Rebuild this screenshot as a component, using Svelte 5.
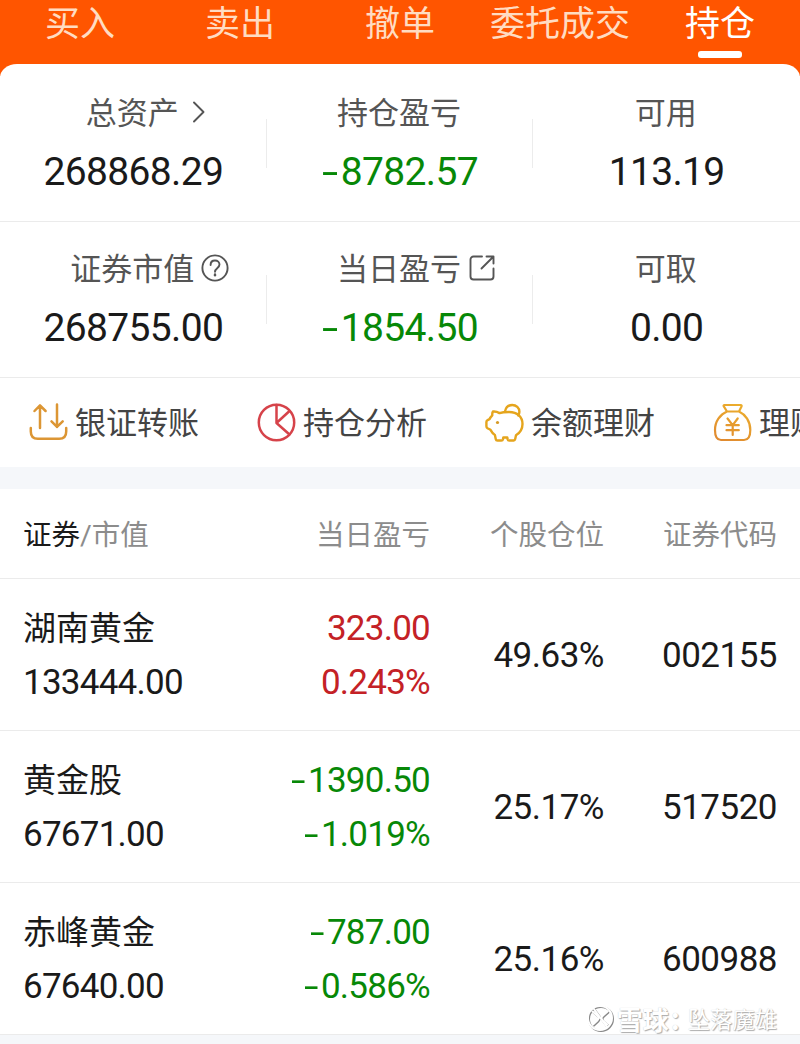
<script>
    const tabs = ["买入", "卖出", "撤单", "委托成交", "持仓"];
    let activeTab = $state("持仓");

    const summary = [
        [
            { label: "总资产", value: "268868.29", icon: "chevron" },
            { label: "持仓盈亏", value: "-8782.57" },
            { label: "可用", value: "113.19" },
        ],
        [
            { label: "证券市值", value: "268755.00", icon: "help" },
            { label: "当日盈亏", value: "-1854.50", icon: "open" },
            { label: "可取", value: "0.00" },
        ],
    ];

    const actions = [
        { label: "银证转账", icon: "transfer" },
        { label: "持仓分析", icon: "pie" },
        { label: "余额理财", icon: "piggy" },
        { label: "理财", icon: "bag" },
    ];

    const holdings = [
        {
            name: "湖南黄金",
            market: "133444.00",
            profit: "323.00",
            rate: "0.243%",
            position: "49.63%",
            code: "002155",
        },
        {
            name: "黄金股",
            market: "67671.00",
            profit: "-1390.50",
            rate: "-1.019%",
            position: "25.17%",
            code: "517520",
        },
        {
            name: "赤峰黄金",
            market: "67640.00",
            profit: "-787.00",
            rate: "-0.586%",
            position: "25.16%",
            code: "600988",
        },
    ];
</script>

{#snippet amount(text)}
    {#if text.startsWith("-")}<span class="sign">-</span>{text.slice(1)}{:else}{text}{/if}
{/snippet}

<main class="page">
    <nav class="tabs">
        {#each tabs as tab}
            <button
                class="tab"
                class:active={tab === activeTab}
                onclick={() => (activeTab = tab)}>{tab}</button
            >
        {/each}
    </nav>

    <section class="summary">
        {#each summary as row}
            <div class="summary-row">
                {#each row as item}
                    <div class="stat">
                        <span class="label">
                            {item.label}
                            {#if item.icon === "chevron"}
                                <svg class="mark chevron" width="14" height="24" viewBox="0 0 14 24">
                                    <path d="M2 2.5 11.5 12 2 21.5" />
                                </svg>
                            {:else if item.icon === "help"}
                                <svg class="mark help" width="28" height="28" viewBox="0 0 28 28">
                                    <circle cx="14" cy="14" r="12.6" />
                                    <path d="M9.6 11c0-2.7 1.8-4.5 4.4-4.5s4.5 1.700 4.500 4.100c0 3.500-4.500 3.700-4.500 7.100" />
                                    <path d="M14 20.500v.8" stroke-width="2.400" />
                                </svg>
                            {:else if item.icon === "open"}
                                <svg class="mark open" width="26" height="26" viewBox="0 0 26 26">
                                    <path d="M13 1.500H4.500a3 3 0 0 0-3 3v17a3 3 0 0 0 3 3h17a3 3 0 0 0 3-3v-8" />
                                    <path d="M17.500 1.500h7v7M24 2 12.500 13.500" />
                                </svg>
                            {/if}
                        </span>
                        <span class="value" class:down={item.value.startsWith("-")}>
                            {@render amount(item.value)}
                        </span>
                    </div>
                {/each}
            </div>
        {/each}
    </section>

    <section class="actions">
        {#each actions as action}
            <button class="action">
                {#if action.icon === "transfer"}
                    <svg width="39" height="39" viewBox="0 0 39 39" stroke="#dc9634" stroke-width="2.5">
                        <path d="M11 25V2.5M5.500 8 11 2.300 16.600 8M28 1.500v22.500M22.500 18.300l5.500 5.600 5.700-5.600" />
                        <path d="M1.800 25v3.500c0 4.500 2.500 7.300 7 7.300h21.400c4.500 0 7-2.800 7-7.300V25" />
                    </svg>
                {:else if action.icon === "pie"}
                    <svg width="39" height="39" viewBox="0 0 39 39" stroke="#d6434a" stroke-width="2.500">
                        <circle cx="19.500" cy="19.500" r="17.700" />
                        <path d="M19.500 2v18L32.500 31.500M19.500 20 32.500 8" />
                    </svg>
                {:else if action.icon === "piggy"}
                    <svg width="39" height="39" viewBox="0 0 39 39" stroke="#e5a51d" stroke-width="2.400">
                        <path
                            d="M8 8.500c2.500-.3 4.500.4 6.500 1.600 3-1 6-1.100 9.500-1.100 8.500 0 13.500 5 13.500 12 0 5-2.500 8.800-6.500 11.300l-.8 3.800c-.2.900-.7 1.400-1.500 1.400h-4.500c-.9 0-1.400-.4-1.600-1.300l-.3-1.700h-4l-.3 1.700c-.2.900-.7 1.300-1.600 1.300h-4c-.9 0-1.400-.4-1.600-1.300l-.9-4.200c-2.200-1.300-3.300-3.200-4.400-5.200l-3-1.500c-.8-.5-1.100-1-1.100-2v-4.300c0-1 .4-1.500 1.200-1.900l1.900-.9c.7-1.700 1.500-2.700 2.800-3.900C7.200 11.200 7 10 8 8.500Z"
                        />
                        <path d="M20 8.500c.8-4 3.500-6.500 7.200-6.500 4 0 7.200 3 7.200 6.800 0 1.600-.4 2.600-1.100 3.600" />
                        <circle cx="12.500" cy="19.500" r="1.600" fill="#d69a26" stroke="none" />
                    </svg>
                {:else}
                    <svg width="39" height="39" viewBox="0 0 39 39" stroke="url(#gold)" stroke-width="2.200">
                        <defs>
                            <linearGradient id="gold" gradientUnits="userSpaceOnUse" x1="30" y1="0" x2="12" y2="39">
                                <stop offset="0" stop-color="#edb02c" />
                                <stop offset="1" stop-color="#e08a30" />
                            </linearGradient>
                        </defs>
                        <path
                            d="M11.500 2h16.200c.9 0 1.200.7.800 1.400L26 8.500H14l-3.200-5.100C10.300 2.700 10.600 2 11.500 2ZM14 8.500C7 11.500 2 18.500 2 27c0 6.500 1.500 10 6 10h23c4.500 0 6.300-3.500 6.300-10 0-8.500-4.800-15.500-11.300-18.500"
                        />
                        <path d="M14.500 15.500l5.200 6.700 5-6.700M13.500 22.200h12.300M13.500 27.200h12.300M19.700 22.200v9.800" />
                    </svg>
                {/if}
                <span>{action.label}</span>
            </button>
        {/each}
    </section>

    <section class="holdings">
        <div class="row head">
            <span class="first"><b>证券</b>/市值</span>
            <span>当日盈亏</span>
            <span>个股仓位</span>
            <span>证券代码</span>
        </div>
        {#each holdings as stock}
            <div class="row">
                <div class="pair first">
                    <span class="name">{stock.name}</span>
                    <span>{stock.market}</span>
                </div>
                <div class="pair {stock.profit.startsWith('-') ? 'down' : 'up'}">
                    <span>{@render amount(stock.profit)}</span>
                    <span>{@render amount(stock.rate)}</span>
                </div>
                <span>{stock.position}</span>
                <span>{stock.code}</span>
            </div>
        {/each}
    </section>

    <div class="watermark">
        <svg width="28" height="28" viewBox="0 0 28 28">
            <circle cx="14" cy="14" r="12" />
            <path d="M6.500 7.500 11 11.500c2 1.800 2 3.200.3 5L7 20.500M8 5l13 18M21.500 7.500 17 11.500c-2 1.800-2 3.200-.3 5l4.500 4" />
        </svg>
        <strong>雪球：</strong><span>坠落魔雄</span>
    </div>
</main>

<style>
    :global(body) {
        background: #f5f7fa;
    }

    .page {
        position: relative;
        width: 800px;
        height: 1044px;
        overflow: hidden;
        background: #f5f7fa;
        font-family: Roboto, "Noto Sans CJK SC", sans-serif;
        color: #1a1a1a;
    }

    button {
        padding: 0;
        border: none;
        background: none;
        font: inherit;
        cursor: pointer;
    }

    svg {
        fill: none;
        stroke-linecap: round;
        stroke-linejoin: round;
        flex-shrink: 0;
    }

    .tabs {
        display: grid;
        grid-template-columns: repeat(5, 1fr);
        height: 76px;
        background: #ff5500;
    }

    .tab {
        position: relative;
        height: 50px;
        line-height: 50px;
        font-size: 35px;
        color: #ffdcc2;
        white-space: nowrap;
    }

    .tab.active {
        color: #fff;
    }

    .tab.active::after {
        content: "";
        position: absolute;
        left: 58px;
        top: 51px;
        width: 44px;
        height: 7px;
        border-radius: 3px;
        background: #fff;
    }

    .summary {
        margin-top: -12px;
        background: #fff;
        border-radius: 17px 17px 0 0 / 14px 14px 0 0;
    }

    .summary-row {
        display: grid;
        grid-template-columns: repeat(3, 1fr);
        height: 155px;
        border-bottom: 1px solid #ebebeb;
    }

    .summary-row:first-child {
        padding-top: 2px;
    }

    .stat {
        position: relative;
        display: flex;
        flex-direction: column;
        align-items: center;
        padding-top: 25px;
    }

    .stat + .stat::before {
        content: "";
        position: absolute;
        left: -1px;
        top: 53px;
        width: 1px;
        height: 49px;
        background: #ececec;
    }

    .label {
        position: relative;
        left: -1px;
        height: 46px;
        line-height: 46px;
        font-size: 31px;
        color: #555;
    }

    .mark {
        position: absolute;
        left: 100%;
        stroke: #555;
        stroke-width: 1.9;
    }

    .chevron {
        top: 9px;
        margin-left: 13px;
    }

    .help {
        top: 7px;
        margin-left: 7px;
    }

    .open {
        top: 8px;
        margin-left: 8px;
    }

    .value {
        margin-top: 12px;
        height: 46px;
        line-height: 46px;
        font-size: 39px;
        letter-spacing: -0.65px;
    }

    .sign {
        display: inline-block;
        width: 0.48em;
        text-align: left;
        transform: scaleX(1.5);
        transform-origin: left;
    }

    .down {
        color: #078807;
    }

    .up {
        color: #c42126;
    }

    .actions {
        display: flex;
        height: 89px;
        background: #fff;
        overflow: hidden;
        margin-bottom: 22px;
    }

    .action {
        display: flex;
        align-items: center;
        flex: 0 0 228px;
        gap: 7px;
        padding-left: 29px;
        box-sizing: border-box;
        font-size: 31px;
        color: #444;
        white-space: nowrap;
    }

    .action span {
        padding-bottom: 4px;
    }

    .holdings {
        background: #fff;
    }

    .row {
        display: grid;
        grid-template-columns: 200px 207px 174px 173px;
        align-items: center;
        height: 149px;
        padding: 2px 23px 0;
        border-bottom: 1px solid #ebebeb;
        font-size: 35px;
        letter-spacing: -0.5px;
        text-align: right;
    }

    .head {
        height: 87px;
        padding: 0 23px 2px;
        font-size: 28.5px;
        letter-spacing: 0;
        color: #8c8c8c;
    }

    .head b {
        font-weight: 400;
        color: #1a1a1a;
    }

    .first {
        text-align: left;
    }

    .pair {
        display: flex;
        flex-direction: column;
        line-height: 54px;
        letter-spacing: -0.75px;
    }

    .name {
        font-size: 33px;
        letter-spacing: 0;
    }

    .watermark {
        position: absolute;
        right: 23px;
        top: 1002px;
        display: flex;
        align-items: center;
        height: 32px;
        font-size: 22.3px;
        color: #fff;
        text-shadow: 1px 1px 1px #aaa, 0 0 1px #ccc;
    }

    .watermark strong {
        width: 71px;
        font-size: 26px;
        white-space: nowrap;
    }

    .watermark svg {
        margin-right: 3px;
        stroke: #fff;
        stroke-width: 2;
        filter: drop-shadow(1px 1px 0.5px #888);
    }
</style>
